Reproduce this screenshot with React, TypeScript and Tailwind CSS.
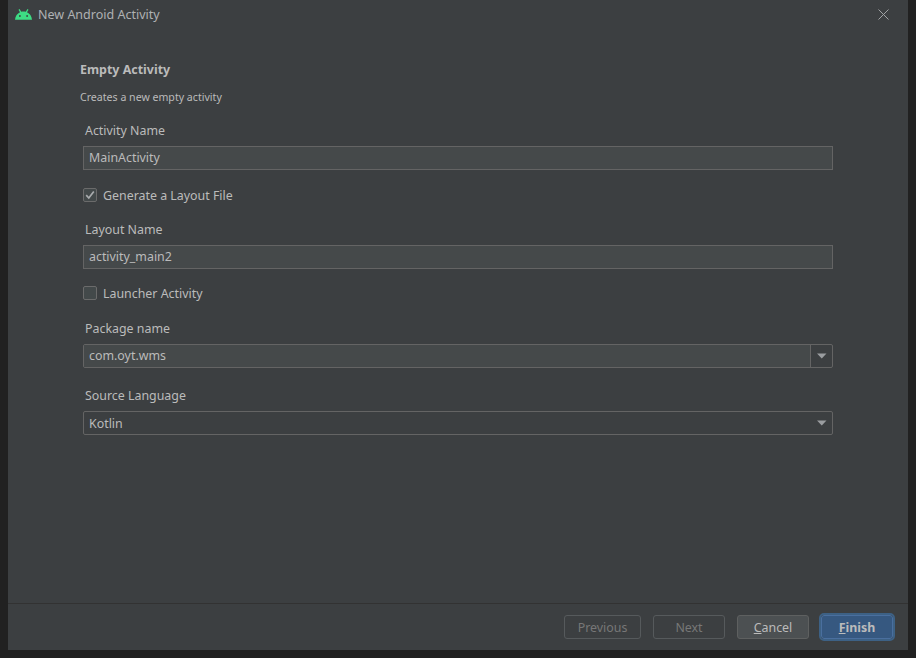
import React from 'react';

const FONT = 'font-["Noto_Sans",sans-serif]';

function FieldLabel({ text, className }: { text: string; className: string }) {
  return <div className={`ml-[2px] h-[18px] text-[12.4px] leading-[18px] text-[#bbbbbb] ${className}`}>{text}</div>;
}

function TextField({ value, className }: { value: string; className: string }) {
  return (
    <div className={`flex h-[24px] w-[750px] items-center border border-[#646464] bg-[#45494a] px-[5px] text-[12.4px] text-[#bbbbbb] ${className}`}>
      {value}
    </div>
  );
}

function Caret() {
  return (
    <svg width="12" height="6" viewBox="0 0 12 6" className="block">
      <path d="M1 0.5H10.5L5.75 5.5Z" fill="#9a9da0" />
    </svg>
  );
}

function Check({ label, checked, className }: { label: string; checked?: boolean; className: string }) {
  return (
    <div className={`flex h-[18px] items-center gap-[6px] ${className}`}>
      <div className="flex h-[14px] w-[14px] items-center justify-center rounded-[2px] border border-[#6b6b6b] bg-[#43494a]">
        {checked && (
          <svg width="10" height="10" viewBox="0 0 10 10">
            <path d="M1.2 5.2L3.8 8L8.8 1.4" fill="none" stroke="#a9acae" strokeWidth="1.7" />
          </svg>
        )}
      </div>
      <span className="pt-[2px] text-[12.4px] text-[#bbbbbb]">{label}</span>
    </div>
  );
}

function FooterButton({ children, className }: { children: React.ReactNode; className: string }) {
  return (
    <div className={`flex h-[24px] items-center justify-center rounded-[3px] border pt-[2px] text-[12.4px] ${className}`}>
      {children}
    </div>
  );
}

export default function App() {
  return (
    <div className={`h-[658px] w-[916px] overflow-hidden bg-[#212121] pl-[8px] ${FONT}`}>
      <div className="flex h-[650px] w-[900px] flex-col bg-[#3c3f41]">
        {/* Title bar */}
        <div className="flex h-[28px] shrink-0 items-center pl-[7px] pr-[19px]">
          <svg width="17" height="11" viewBox="0 0 17 11" className="mr-[6px] block">
            <path d="M0 10.7C0.3 7.2 2.3 4.5 5 3.3L3.5 0.7L4.6 0.1L6.2 2.8C7.6 2.4 9.4 2.4 10.8 2.8L12.4 0.1L13.5 0.7L12 3.3C14.7 4.5 16.7 7.2 17 10.7Z" fill="#3ddc84" />
            <circle cx="4.9" cy="7" r="0.9" fill="#3c3f41" />
            <circle cx="12.1" cy="7" r="0.9" fill="#3c3f41" />
          </svg>
          <span className="pt-[2px] text-[12.5px] text-[#afb1b3]">New Android Activity</span>
          <svg width="11" height="11" viewBox="0 0 11 11" className="ml-auto block">
            <path d="M0.5 0.5L10.5 10.5M10.5 0.5L0.5 10.5" stroke="#a0a2a4" strokeWidth="1" />
          </svg>
        </div>

        {/* Form */}
        <div className="flex-1 pl-[75px]">
          <div className="mt-[33px] ml-[-3px] h-[18px] text-[12.45px] font-bold leading-[18px] text-[#bbbbbb]">Empty Activity</div>
          <div className="mt-[10px] ml-[-3px] h-[16px] text-[10.6px] leading-[16px] text-[#bbbbbb]">Creates a new empty activity</div>
          <FieldLabel text="Activity Name" className="mt-[17px]" />
          <TextField value="MainActivity" className="mt-[6px]" />
          <Check label="Generate a Layout File" checked className="mt-[16px]" />
          <FieldLabel text="Layout Name" className="mt-[17px]" />
          <TextField value="activity_main2" className="mt-[6px]" />
          <Check label="Launcher Activity" className="mt-[15px]" />
          <FieldLabel text="Package name" className="mt-[18px]" />
          <div className="mt-[6px] flex h-[24px] w-[750px] rounded-[2px] border border-[#646464] text-[12.4px] text-[#bbbbbb]">
            <div className="flex flex-1 items-center bg-[#45494a] px-[5px]">com.oyt.wms</div>
            <div className="flex w-[22px] items-center justify-center border-l border-[#646464]">
              <Caret />
            </div>
          </div>
          <FieldLabel text="Source Language" className="mt-[19px]" />
          <div className="mt-[6px] flex h-[24px] w-[750px] items-center justify-between rounded-[2px] border border-[#646464] pl-[5px] pr-[4px] text-[12.4px] text-[#bbbbbb]">
            <span className="pt-[2px]">Kotlin</span>
            <Caret />
          </div>
        </div>

        {/* Footer */}
        <div className="flex h-[47px] shrink-0 items-start border-t border-[#323232] pl-[556px] pt-[11px]">
          <FooterButton className="w-[77px] border-[#565a5c] text-[#777777]">Previous</FooterButton>
          <FooterButton className="ml-[12px] w-[72px] border-[#565a5c] text-[#777777]">Next</FooterButton>
          <FooterButton className="ml-[12px] w-[72px] border-[#5e6060] bg-[#4c5052] text-[#bbbbbb]">
            <span className="underline">C</span>ancel
          </FooterButton>
          <FooterButton className="ml-[12px] w-[72px] border-[#4a6f9e] bg-[#365880] font-bold text-[#bbbbbb] outline-[2px] outline-[#3d6185]">
            <span className="underline">F</span>inish
          </FooterButton>
        </div>
      </div>
    </div>
  );
}
